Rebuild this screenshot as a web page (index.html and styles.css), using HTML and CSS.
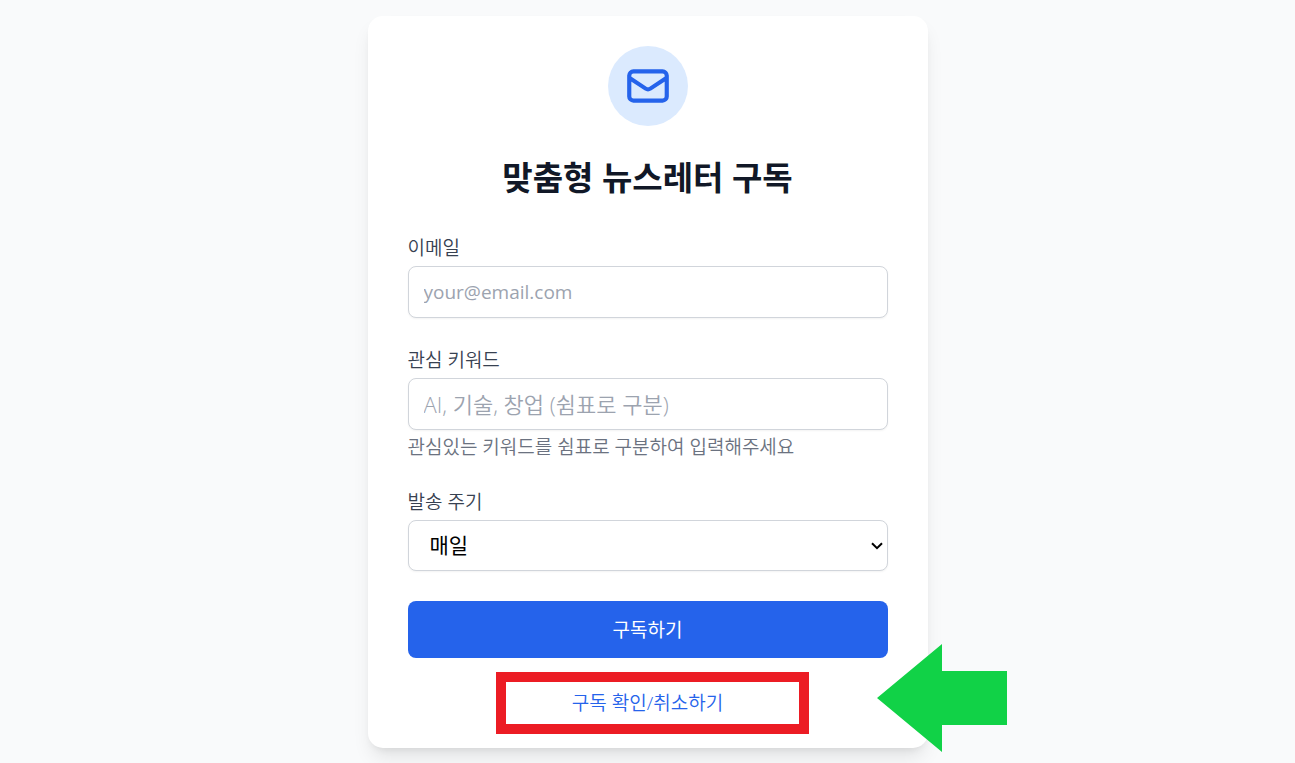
FILE: index.html
```html
<!DOCTYPE html>
<html lang="ko">
<head>
<meta charset="utf-8">
<meta name="viewport" content="width=device-width, initial-scale=1">
<title>맞춤형 뉴스레터 구독</title>
<link rel="stylesheet" href="styles.css">
</head>
<body class="page">
<main class="card">
  <div class="badge">
    <svg class="badge-icon" viewBox="0 0 24 24" fill="none" stroke="currentColor" stroke-width="2" stroke-linecap="round" stroke-linejoin="round" aria-hidden="true">
      <path d="M3 8l7.89 5.26a2 2 0 002.22 0L21 8M5 19h14a2 2 0 002-2V7a2 2 0 00-2-2H5a2 2 0 00-2 2v10a2 2 0 002 2z"/>
    </svg>
  </div>
  <h1 class="title">맞춤형 뉴스레터 구독</h1>
  <form class="form">
    <div class="field">
      <label class="label" for="email">이메일</label>
      <input class="control" id="email" type="email" placeholder="your@email.com">
    </div>
    <div class="field">
      <label class="label" for="keywords">관심 키워드</label>
      <input class="control control-keywords" id="keywords" type="text" placeholder="AI, 기술, 창업 (쉼표로 구분)" aria-describedby="keywords-hint">
      <p class="hint" id="keywords-hint">관심있는 키워드를 쉼표로 구분하여 입력해주세요</p>
    </div>
    <div class="field">
      <label class="label" for="frequency">발송 주기</label>
      <div class="select-wrap">
        <select class="control control-select" id="frequency">
          <option>매일</option>
        </select>
        <svg class="chevron" viewBox="0 0 12 8" fill="none" stroke="#000" stroke-width="2" aria-hidden="true">
          <path d="M1 1.2L6 6.2L11 1.2"/>
        </svg>
      </div>
    </div>
    <button class="submit" type="submit">구독하기</button>
  </form>
  <div class="manage">
    <a class="manage-link" href="#manage">구독 확인/취소하기</a>
    <span class="highlight" aria-hidden="true"></span>
    <svg class="arrow" viewBox="0 0 130 108" aria-hidden="true">
      <path d="M0 54L65 0V27H130V81H65V108Z" fill="#11d247"/>
    </svg>
  </div>
</main>
</body>
</html>
```
FILE: styles.css
```css
*, *::before, *::after {
  box-sizing: border-box;
}

.page {
  margin: 0;
  min-height: 100vh;
  padding: 16px 16px 15px;
  display: flex;
  align-items: flex-start;
  justify-content: center;
  background: #f9fafb;
  font-family: "Open Sans", "Noto Sans CJK KR", sans-serif;
  font-weight: 350;
  color: #111827;
}

.card {
  width: 100%;
  max-width: 560px;
  padding: 30px 40px 32px;
  border-radius: 15px;
  background: #fff;
  box-shadow: 0 12px 19px -4px rgba(0, 0, 0, 0.1), 0 5px 8px -5px rgba(0, 0, 0, 0.1);
}

.badge {
  width: 80px;
  height: 80px;
  margin: 0 auto;
  display: flex;
  align-items: center;
  justify-content: center;
  border-radius: 50%;
  background: #dbeafe;
  color: #2563eb;
}

.badge-icon {
  width: 50px;
  height: 50px;
}

.title {
  margin: 32px 0 38px;
  font-size: 33px;
  font-weight: 700;
  line-height: 40px;
  text-align: center;
}

.form {
  display: flex;
  flex-direction: column;
  gap: 30px;
}

.field {
  display: flex;
  flex-direction: column;
  gap: 5px;
}

.label,
.hint {
  margin: 0;
  font-size: 19px;
  line-height: 25px;
  color: #374151;
}

.hint {
  color: #6b7280;
}

.control {
  width: 100%;
  height: 52px;
  padding: 0 15px;
  border: 1px solid #d1d5db;
  border-radius: 8px;
  background: #fff;
  box-shadow: 0 1px 2px rgba(0, 0, 0, 0.05);
  font-family: inherit;
  font-size: 19px;
  font-weight: 400;
  color: #000;
}

.control::placeholder {
  color: #9ca3af;
  opacity: 1;
}

.control-keywords {
  font-size: 22px;
  font-weight: 350;
}

.select-wrap {
  position: relative;
  display: flex;
}

.control-select {
  height: 51px;
  padding: 0 24px 2px 21px;
  appearance: none;
  font-size: 21px;
}

.chevron {
  position: absolute;
  top: 22px;
  right: 5px;
  width: 12px;
  height: 8px;
  pointer-events: none;
}

.submit {
  height: 57px;
  padding: 0 0 2px;
  border: 0;
  border-radius: 8px;
  background: #2563eb;
  font-family: inherit;
  font-size: 19px;
  font-weight: 400;
  color: #fff;
}

.manage {
  position: relative;
  margin-top: 33px;
  font-size: 19px;
  line-height: 25px;
  text-align: center;
}

.manage-link {
  color: #2563eb;
  text-decoration: none;
}

.highlight {
  position: absolute;
  top: -19px;
  left: 88px;
  width: 313px;
  height: 62px;
  border: 10px solid #ec1c24;
  pointer-events: none;
}

.arrow {
  position: absolute;
  top: -47px;
  left: 469px;
  width: 130px;
  height: 108px;
}
```
